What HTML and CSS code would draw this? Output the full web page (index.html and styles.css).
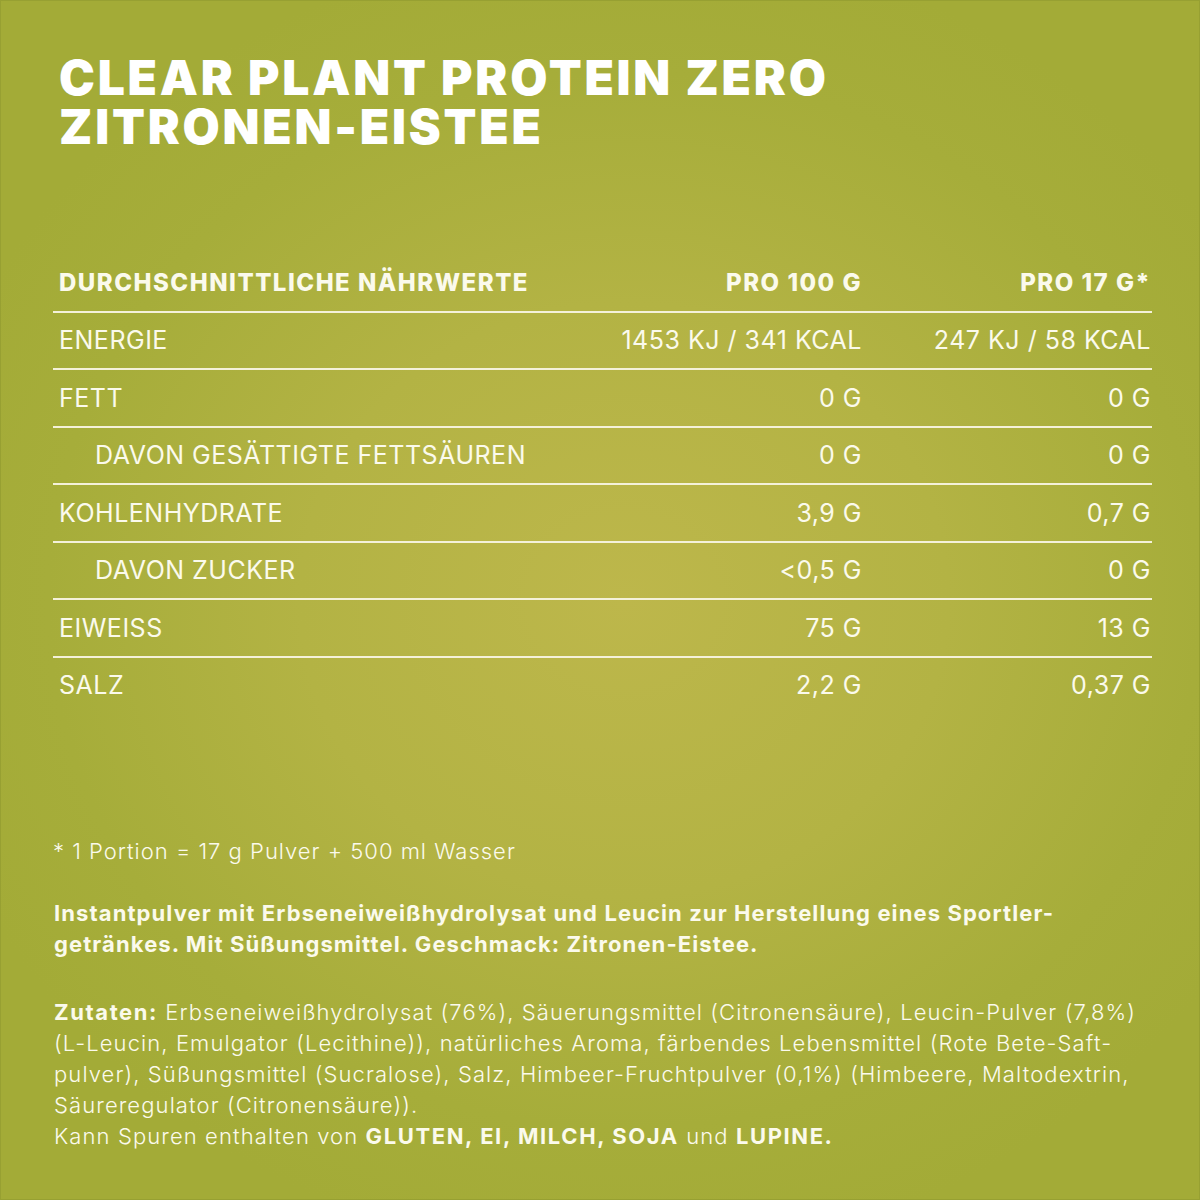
FILE: index.html
```html
<!DOCTYPE html>
<html lang="de">
<head>
<meta charset="utf-8">
<title>Clear Plant Protein Zero – Zitronen-Eistee</title>
<link rel="stylesheet" href="styles.css">
</head>
<body>
<main class="page">
  <h1 class="title"><span class="tline">CLEAR PLANT PROTEIN ZERO</span><span class="tline">ZITRONEN-EISTEE</span></h1>

  <div class="table">
    <div class="row head">
      <div class="c1">DURCHSCHNITTLICHE NÄHRWERTE</div>
      <div class="c2">PRO 100 G</div>
      <div class="c3">PRO 17 G*</div>
    </div>
    <div class="row">
      <div class="c1">ENERGIE</div>
      <div class="c2">1453 KJ / 341 KCAL</div>
      <div class="c3">247 KJ / 58 KCAL</div>
    </div>
    <div class="row">
      <div class="c1">FETT</div>
      <div class="c2">0 G</div>
      <div class="c3">0 G</div>
    </div>
    <div class="row">
      <div class="c1 sub">DAVON GESÄTTIGTE FETTSÄUREN</div>
      <div class="c2">0 G</div>
      <div class="c3">0 G</div>
    </div>
    <div class="row">
      <div class="c1">KOHLENHYDRATE</div>
      <div class="c2">3,9 G</div>
      <div class="c3">0,7 G</div>
    </div>
    <div class="row">
      <div class="c1 sub">DAVON ZUCKER</div>
      <div class="c2">&lt;0,5 G</div>
      <div class="c3">0 G</div>
    </div>
    <div class="row">
      <div class="c1">EIWEISS</div>
      <div class="c2">75 G</div>
      <div class="c3">13 G</div>
    </div>
    <div class="row last">
      <div class="c1">SALZ</div>
      <div class="c2">2,2 G</div>
      <div class="c3">0,37 G</div>
    </div>
  </div>

  <p class="note">* 1 Portion = 17 g Pulver + 500 ml Wasser</p>

  <p class="desc">Instantpulver mit Erbseneiweißhydrolysat und Leucin zur Herstellung eines Sportler-<br>getränkes. Mit Süßungsmittel. Geschmack: Zitronen-Eistee.</p>

  <p class="ingr"><b>Zutaten:</b> Erbseneiweißhydrolysat (76%), Säuerungsmittel (Citronensäure), Leucin-Pulver (7,8%)<br>(L-Leucin, Emulgator (Lecithine)), natürliches Aroma, färbendes Lebensmittel (Rote Bete-Saft-<br>pulver), Süßungsmittel (Sucralose), Salz, Himbeer-Fruchtpulver (0,1%) (Himbeere, Maltodextrin,<br>Säureregulator (Citronensäure)).<br>Kann Spuren enthalten von <b>GLUTEN, EI, MILCH, SOJA</b> und <b>LUPINE.</b></p>
</main>
</body>
</html>
```

FILE: styles.css
```css
html, body {
  margin: 0;
  padding: 0;
}
body {
  width: 1200px;
  height: 1200px;
  overflow: hidden;
  font-family: "Inter", "Liberation Sans", sans-serif;
  color: #fbfaec;
  background: radial-gradient(ellipse 60% 55% at 52% 50%, #bdb74b 0%, #b3b344 45%, #a6ad3a 80%, #a3ab37 100%);
}
.page {
  box-sizing: border-box;
  width: 1200px;
  height: 1200px;
  padding: 52px 49px 0 52px;
  border: 1px solid #97a032;
}
.title {
  margin: 0 0 0 6px;
  font-weight: 900;
  font-size: 48px;
  line-height: 49px;
  letter-spacing: 2.8px;
  color: #ffffff;
}
.tline {
  display: block;
  height: 49px;
  line-height: 49px;
}
.table {
  margin-top: 104px;
  width: 1099px;
}
.row {
  display: grid;
  grid-template-columns: 1fr 300px 291px;
  align-items: center;
  height: 55.5px;
  border-bottom: 2px solid #f4f1d9;
  font-size: 25px;
  font-weight: 400;
  letter-spacing: 0.5px;
}
.row.last {
  border-bottom: none;
}
.row.head {
  font-weight: 800;
  font-size: 24px;
  letter-spacing: 1.5px;
}
.c1 {
  padding-left: 6px;
}
.c1.sub {
  padding-left: 42px;
}
.c2, .c3 {
  text-align: right;
}
.c2 {
  margin-right: -1px;
}
.c3 {
  padding-right: 1px;
}
.note {
  margin: 123px 0 0 0;
  font-size: 22px;
  font-weight: 300;
  line-height: 30px;
  letter-spacing: 1px;
}
.desc {
  margin: 32px 0 0 1px;
  font-size: 22px;
  font-weight: 700;
  line-height: 31px;
  letter-spacing: 1.1px;
}
.ingr {
  margin: 37px 0 0 1px;
  font-size: 22px;
  font-weight: 300;
  line-height: 31px;
  letter-spacing: 1.1px;
}
.ingr b {
  font-weight: 700;
  letter-spacing: 1.6px;
}
```
